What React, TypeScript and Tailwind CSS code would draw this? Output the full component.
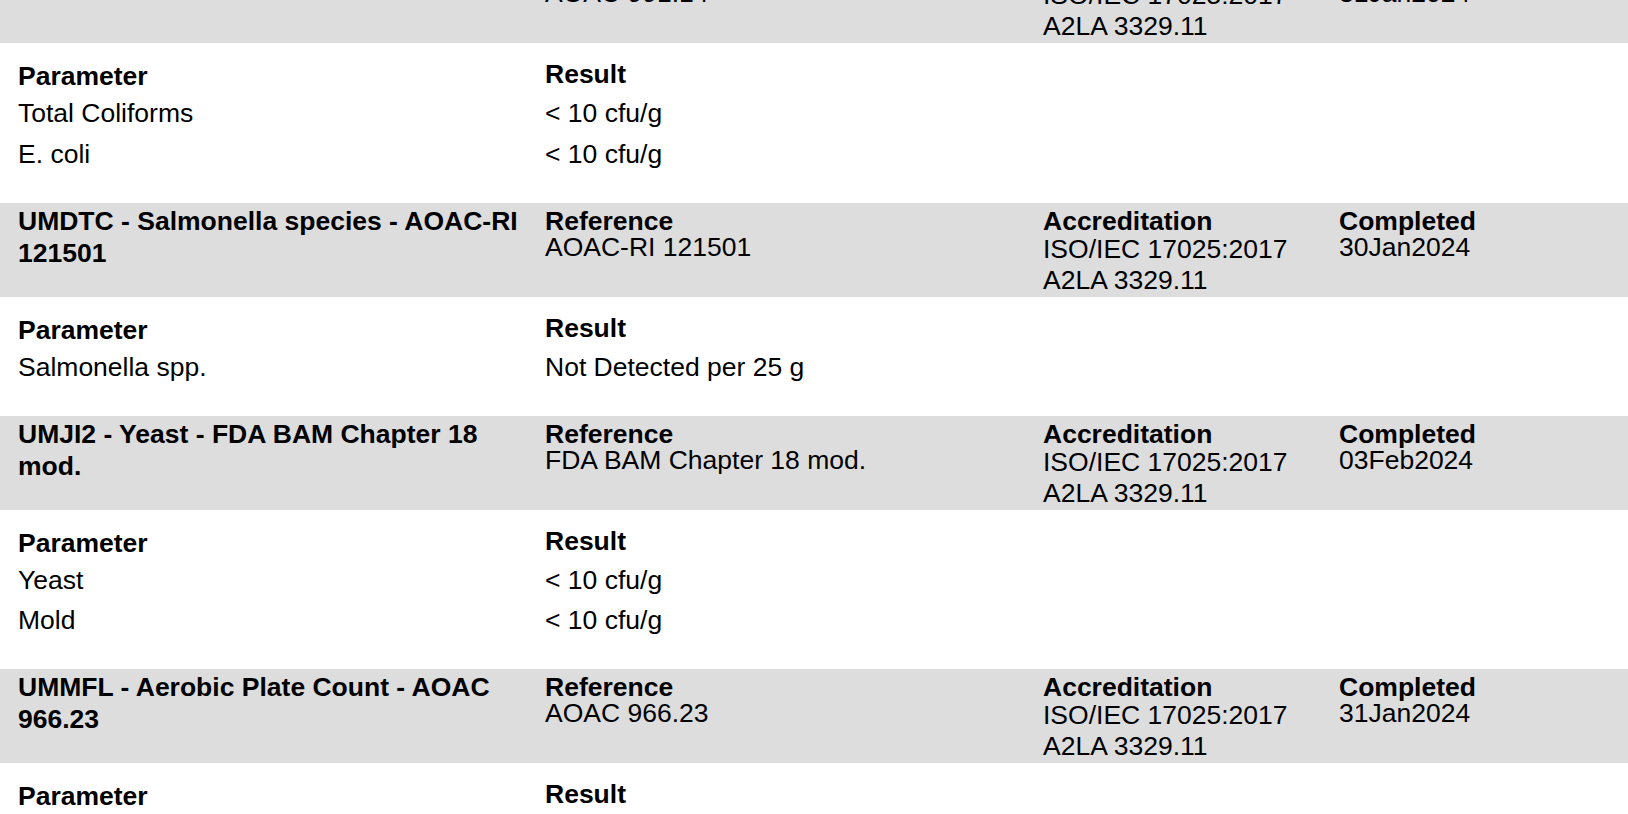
type Param = [string, string];

type Test = {
  title: string;
  reference: string;
  accreditation: string[];
  completed: string;
  params: Param[];
};

const TESTS: Test[] = [
  {
    title: "UMCEC - Coliforms & E. coli",
    reference: "AOAC 991.14",
    accreditation: ["ISO/IEC 17025:2017", "A2LA 3329.11"],
    completed: "31Jan2024",
    params: [
      ["Total Coliforms", "< 10 cfu/g"],
      ["E. coli", "< 10 cfu/g"],
    ],
  },
  {
    title: "UMDTC - Salmonella species - AOAC-RI 121501",
    reference: "AOAC-RI 121501",
    accreditation: ["ISO/IEC 17025:2017", "A2LA 3329.11"],
    completed: "30Jan2024",
    params: [["Salmonella spp.", "Not Detected per 25 g"]],
  },
  {
    title: "UMJI2 - Yeast - FDA BAM Chapter 18 mod.",
    reference: "FDA BAM Chapter 18 mod.",
    accreditation: ["ISO/IEC 17025:2017", "A2LA 3329.11"],
    completed: "03Feb2024",
    params: [
      ["Yeast", "< 10 cfu/g"],
      ["Mold", "< 10 cfu/g"],
    ],
  },
  {
    title: "UMMFL - Aerobic Plate Count - AOAC 966.23",
    reference: "AOAC 966.23",
    accreditation: ["ISO/IEC 17025:2017", "A2LA 3329.11"],
    completed: "31Jan2024",
    params: [["Aerobic Plate Count", "< 10 cfu/g"]],
  },
];

function TestHeader({ test, first }: { test: Test; first: boolean }) {
  return (
    <div
      className={`grid grid-cols-[527px_498px_296px_1fr] bg-[#dddddd] pl-[18px] pt-[5px] pb-[1px] ${
        first ? "-mt-[51px]" : ""
      }`}
    >
      <div className="-mt-[3px] pr-[14px] font-bold leading-[32px]">{test.title}</div>
      <div>
        <div className="font-bold leading-[26px]">Reference</div>
        <div className="leading-[27px]">{test.reference}</div>
      </div>
      <div>
        <div className="font-bold leading-[26px]">Accreditation</div>
        {test.accreditation.map((a) => (
          <div key={a} className="leading-[31px]">
            {a}
          </div>
        ))}
      </div>
      <div>
        <div className="font-bold leading-[26px]">Completed</div>
        <div className="leading-[27px]">{test.completed}</div>
      </div>
    </div>
  );
}

function ParamTable({ params }: { params: Param[] }) {
  return (
    <div className="grid grid-cols-[527px_1fr] pl-[18px] pt-[16px] pb-[28.5px]">
      <div className="font-bold leading-[34px]">Parameter</div>
      <div className="font-bold leading-[30px]">Result</div>
      {params.map(([name, result]) => (
        <div key={name} className="contents">
          <div className="leading-[40.5px]">{name}</div>
          <div className="leading-[40.5px]">{result}</div>
        </div>
      ))}
    </div>
  );
}

export default function App() {
  return (
    <div className="h-[814px] overflow-hidden bg-white font-['Liberation_Sans',Arial,sans-serif] text-[26.5px] text-black">
      {TESTS.map((t, i) => (
        <div key={t.title}>
          <TestHeader test={t} first={i === 0} />
          <ParamTable params={t.params} />
        </div>
      ))}
    </div>
  );
}
